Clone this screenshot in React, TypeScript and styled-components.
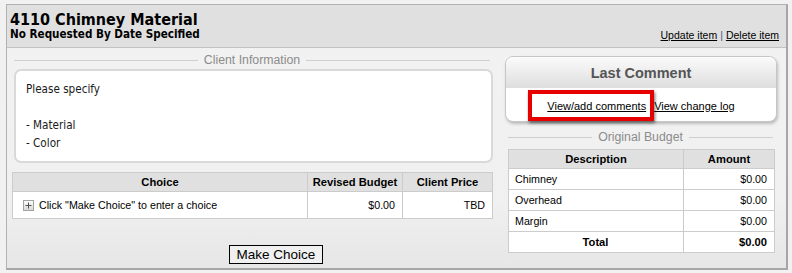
import React from "react";
import styled, { createGlobalStyle } from "styled-components";

const GlobalStyle = createGlobalStyle`
  html, body { margin: 0; padding: 0; background: #f1f1f1; }
  body { font-family: "Liberation Sans", Arial, sans-serif; color: #000; }
  * { box-sizing: border-box; }
`;

const Panel = styled.div`
  margin: 4px 0 0 6px;
  width: 782px;
  height: 266px;
  border: 1px solid #b2b2b2;
  border-right: 2px solid #a6a6a6;
  border-bottom: 2px solid #a6a6a6;
  background: linear-gradient(#f2f2f2 0%, #f0f0f0 75%, #e6e6e6 100%);
  display: flex;
  flex-direction: column;
`;

const Header = styled.div`
  height: 43px;
  background: #e0e0e0;
  border-bottom: 1px solid #c2c2c2;
  display: flex;
  justify-content: space-between;
  padding: 6px 7px 0 3px;
`;

const TitleBlock = styled.div`
  display: flex;
  flex-direction: column;
`;

const Title = styled.div`
  font-family: "DejaVu Sans Condensed", "DejaVu Sans", sans-serif;
  font-weight: bold;
  font-size: 16px;
  line-height: 17px;
  color: #000;
`;

const Subtitle = styled.div`
  font-family: "DejaVu Sans Condensed", "DejaVu Sans", sans-serif;
  font-weight: bold;
  font-size: 11.6px;
  line-height: 12px;
  color: #000;
`;

const HeaderLinks = styled.div`
  align-self: flex-end;
  padding-bottom: 5px;
  font-size: 10.5px;
  line-height: 14px;
`;

const Link = styled.a`
  color: #000;
  text-decoration: underline;
  cursor: pointer;
`;

const Sep = styled.span`
  color: #3a5a8a;
  margin: 0 3px;
`;

const Body = styled.div`
  height: 220px;
  display: flex;
  gap: 12px;
  padding: 0 8px 0 5px;
`;

const LeftCol = styled.div`
  width: 481px;
  display: flex;
  flex-direction: column;
`;

const RightCol = styled.div`
  width: 273px;
  display: flex;
  flex-direction: column;
`;

const Legend = styled.div<{ $top: number; $left: number; $width: number }>`
  margin-top: ${(p) => p.$top}px;
  margin-left: ${(p) => p.$left}px;
  width: ${(p) => p.$width}px;
  height: 14px;
  display: flex;
  align-items: center;
  gap: 6px;
  font-size: 12.3px;
  color: #8c8c8c;
  &::before, &::after {
    content: "";
    flex: 1;
    border-top: 1px solid #cfcfcf;
  }
`;

const ClientBox = styled.div`
  margin: 2px 0 0 2px;
  width: 479px;
  height: 94px;
  background: #fff;
  border: 2px solid #d9d9d9;
  border-radius: 7px;
  padding: 9px 10px;
  font-family: "DejaVu Sans Condensed", "DejaVu Sans", sans-serif;
  font-size: 11.6px;
  line-height: 18px;
  color: #1a1a1a;
`;

const Line = styled.div`
  height: 18px;
`;

const Table = styled.table<{ $top: number; $left: number; $width: number }>`
  margin-top: ${(p) => p.$top}px;
  margin-left: ${(p) => p.$left}px;
  width: ${(p) => p.$width}px;
  border-collapse: collapse;
  background: #fff;
  font-size: 10.7px;
`;

const Th = styled.th<{ $w?: number }>`
  ${(p) => (p.$w ? `width: ${p.$w}px;` : "")}
  background: #e0e0e0;
  border: 1px solid #cccccc;
  height: 19px;
  padding: 0;
  font-size: 11.2px;
  font-weight: bold;
  text-align: center;
  vertical-align: middle;
`;

const Td = styled.td<{ $align?: string; $bold?: boolean; $h: number }>`
  border: 1px solid #cccccc;
  height: ${(p) => p.$h}px;
  padding: 0 7px 0 6px;
  text-align: ${(p) => p.$align || "left"};
  font-weight: ${(p) => (p.$bold ? "bold" : "normal")};
  font-size: ${(p) => (p.$bold ? "11.2px" : "10.7px")};
  vertical-align: middle;
`;

const ChoiceCell = styled.div`
  display: flex;
  align-items: center;
  gap: 5px;
  padding-left: 4px;
`;

const PlusBox = styled.span`
  width: 11px;
  height: 11px;
  border: 1px solid #a3a3a3;
  background: linear-gradient(#ffffff, #d6d6d6);
  display: inline-flex;
  align-items: center;
  justify-content: center;
`;

const MakeChoiceButton = styled.button`
  margin: 26px 0 0 217px;
  width: 94px;
  height: 19px;
  border: 1px solid #000;
  background: #f0f0f0;
  font-family: "Liberation Sans", Arial, sans-serif;
  font-size: 13.5px;
  line-height: 15px;
  padding: 0;
  color: #000;
  align-self: flex-start;
`;

const CommentBox = styled.div`
  position: relative;
  margin-top: 8px;
  width: 272px;
  height: 66px;
  border: 1px solid #c6c6c6;
  border-radius: 8px;
  background: #fff;
  box-shadow: 1px 2px 3px rgba(0, 0, 0, 0.22);
`;

const CommentHeader = styled.div`
  height: 31px;
  border-radius: 7px 7px 0 0;
  background: linear-gradient(#fbfbfb, #dedede);
  display: flex;
  align-items: center;
  justify-content: center;
  font-size: 14.5px;
  font-weight: bold;
  color: #555;
`;

const CommentLinks = styled.div`
  display: flex;
  justify-content: center;
  gap: 8px;
  padding-top: 12px;
  font-size: 11px;
  line-height: 13px;
`;

const Highlight = styled.div`
  position: absolute;
  left: 22px;
  top: 33px;
  width: 126px;
  height: 31px;
  border: 4px solid #e60000;
  box-shadow: 1px 2px 3px rgba(0, 0, 0, 0.55);
  pointer-events: none;
`;

const PlusIcon = () => (
  <svg width="7" height="7" viewBox="0 0 7 7">
    <path d="M3.5 0.5v6M0.5 3.5h6" stroke="#505050" strokeWidth="1" />
  </svg>
);

const budgetRows = [
  { d: "Chimney", a: "$0.00" },
  { d: "Overhead", a: "$0.00" },
  { d: "Margin", a: "$0.00" },
];

export default function App() {
  return (
    <>
      <GlobalStyle />
      <Panel>
        <Header>
          <TitleBlock>
            <Title>4110 Chimney Material</Title>
            <Subtitle>No Requested By Date Specified</Subtitle>
          </TitleBlock>
          <HeaderLinks>
            <Link>Update item</Link>
            <Sep>|</Sep>
            <Link>Delete item</Link>
          </HeaderLinks>
        </Header>
        <Body>
          <LeftCol>
            <Legend $top={5} $left={2} $width={476}>Client Information</Legend>
            <ClientBox>
              <Line>Please specify</Line>
              <Line />
              <Line>- Material</Line>
              <Line>- Color</Line>
            </ClientBox>
            <Table $top={9} $left={0} $width={481}>
              <thead>
                <tr>
                  <Th>Choice</Th>
                  <Th $w={95}>Revised Budget</Th>
                  <Th $w={90}>Client Price</Th>
                </tr>
              </thead>
              <tbody>
                <tr>
                  <Td $h={27}>
                    <ChoiceCell>
                      <PlusBox>
                        <PlusIcon />
                      </PlusBox>
                      Click "Make Choice" to enter a choice
                    </ChoiceCell>
                  </Td>
                  <Td $h={27} $align="right">$0.00</Td>
                  <Td $h={27} $align="right">TBD</Td>
                </tr>
              </tbody>
            </Table>
            <MakeChoiceButton>Make Choice</MakeChoiceButton>
          </LeftCol>
          <RightCol>
            <CommentBox>
              <CommentHeader>Last Comment</CommentHeader>
              <CommentLinks>
                <Link>View/add comments</Link>
                <Link>View change log</Link>
              </CommentLinks>
              <Highlight />
            </CommentBox>
            <Legend $top={8} $left={3} $width={265}>Original Budget</Legend>
            <Table $top={5} $left={3} $width={267}>
              <thead>
                <tr>
                  <Th>Description</Th>
                  <Th $w={91}>Amount</Th>
                </tr>
              </thead>
              <tbody>
                {budgetRows.map((r) => (
                  <tr key={r.d}>
                    <Td $h={21}>{r.d}</Td>
                    <Td $h={21} $align="right">{r.a}</Td>
                  </tr>
                ))}
                <tr>
                  <Td $h={21} $align="center" $bold>Total</Td>
                  <Td $h={21} $align="right" $bold>$0.00</Td>
                </tr>
              </tbody>
            </Table>
          </RightCol>
        </Body>
      </Panel>
    </>
  );
}
